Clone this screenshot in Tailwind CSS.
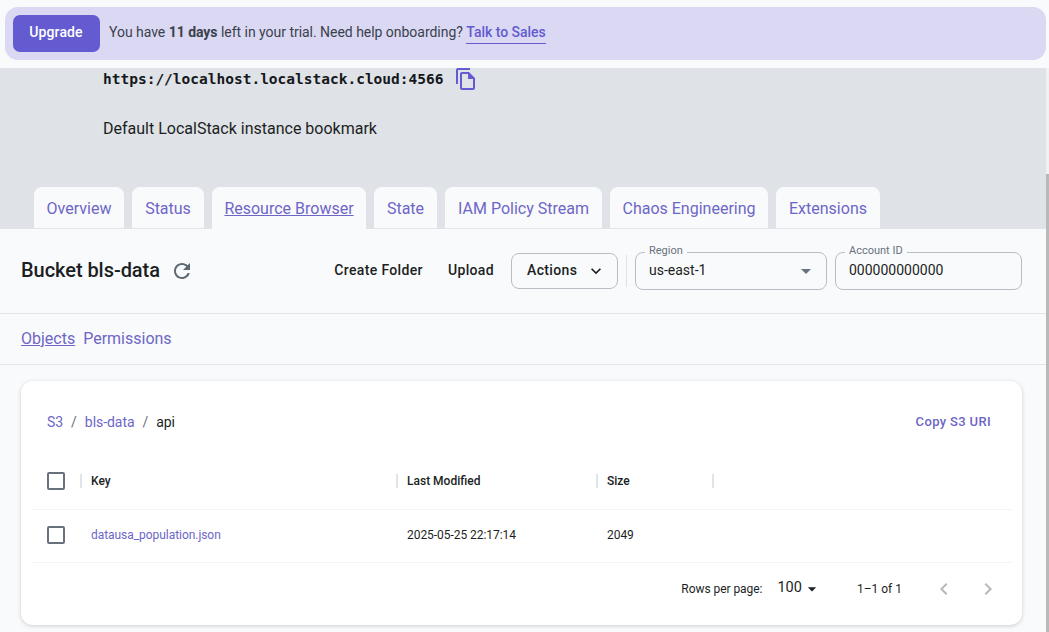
<!doctype html>
<html><head><meta charset="utf-8"><script src="https://cdn.jsdelivr.net/npm/@tailwindcss/browser@4"></script></head>
<body class="m-0 w-[1049px] h-[632px] overflow-hidden bg-[#f9fafb] font-['Roboto',sans-serif] text-[#1b1f24] relative">
<div class="absolute z-10 right-0 top-[68px] w-[3px] h-[564px] bg-[#f1f1f1]"><div class="mt-[106px] h-[458px] bg-[#b9b9b9]"></div></div>
<div class="h-[68px] pt-[7px] px-[5px] pr-[3px]">
  <div class="h-[53px] rounded-[13px] bg-[#dbd8f3] flex items-center pl-[8px] gap-[9px]">
    <div class="w-[87px] h-[37px] rounded-[7px] bg-[#635bcf] text-white text-[14px] font-medium tracking-[0.1px] flex items-center justify-center pb-[2px] pr-[1px]">Upgrade</div>
    <div class="text-[14px] text-[#39414c] tracking-[-0.03px] -mt-[2px]">You have <b class="font-bold">11 days</b> left in your trial. Need help onboarding? <span class="font-medium text-[#635bcf] border-b border-[#635bcf] pb-[3px]">Talk to Sales</span></div>
  </div>
</div>
<div class="h-[161px] bg-[#dfe2e6] relative">
  <div class="pl-[103px] pt-[2px] flex items-start h-[49px]">
    <span class="font-['DejaVu_Sans_Mono',monospace] font-bold text-[14.5px] leading-[18px] text-[#15181c]">https://localhost.localstack.cloud:4566</span>
    <svg class="ml-[11px] -mt-[3px]" width="24" height="24" viewBox="0 0 24 24" fill="#635bcf"><path d="M16 1H4c-1.1 0-2 .9-2 2v14h2V3h12V1zm-1 4H8c-1.1 0-1.99.9-1.99 2L6 21c0 1.1.89 2 1.99 2H19c1.1 0 2-.9 2-2V11l-6-6zM8 21V7h6v5h5v9H8z"/></svg>
  </div>
  <div class="pl-[103px] text-[16px] leading-[24px]">Default LocalStack instance bookmark</div>
  <div class="absolute left-[34px] bottom-0 flex gap-[8px] text-[16px] text-[#6d66c7] text-center">
    <div class="w-[90px] h-[42px] pt-[10px] rounded-t-[8px] bg-[#f9fafb] border-b border-[#e1e4e8]">Overview</div>
    <div class="w-[72px] h-[42px] pt-[10px] rounded-t-[8px] bg-[#f9fafb] border-b border-[#e1e4e8]">Status</div>
    <div class="w-[154px] h-[42px] pt-[10px] rounded-t-[8px] bg-[#f9fafb] underline">Resource Browser</div>
    <div class="w-[63px] h-[42px] pt-[10px] rounded-t-[8px] bg-[#f9fafb] border-b border-[#e1e4e8]">State</div>
    <div class="w-[157px] h-[42px] pt-[10px] rounded-t-[8px] bg-[#f9fafb] border-b border-[#e1e4e8]">IAM Policy Stream</div>
    <div class="w-[158px] h-[42px] pt-[10px] rounded-t-[8px] bg-[#f9fafb] border-b border-[#e1e4e8]">Chaos Engineering</div>
    <div class="w-[104px] h-[42px] pt-[10px] rounded-t-[8px] bg-[#f9fafb] border-b border-[#e1e4e8]">Extensions</div>
  </div>
</div>
<div class="h-[85px] border-b border-[#e1e4e8] flex items-center pl-[21px] pr-[24px] mr-[3px]">
  <span class="text-[20px] font-medium leading-[28px] tracking-[-0.05px] -mt-[2px]">Bucket bls-data</span>
  <svg class="ml-[10px]" width="24" height="24" viewBox="0 0 24 24" fill="#5d6975"><path d="M17.65 6.35C16.2 4.9 14.21 4 12 4c-4.42 0-7.99 3.58-7.99 8s3.57 8 7.99 8c3.73 0 6.84-2.55 7.73-6h-2.08c-.82 2.33-3.04 4-5.65 4-3.31 0-6-2.69-6-6s2.69-6 6-6c1.66 0 3.14.69 4.22 1.78L13 11h7V4l-2.35 2.35z"/></svg>
  <div class="ml-auto flex items-center">
    <span class="text-[14px] font-medium tracking-[0.35px] mr-[25px] -mt-[2px]">Create Folder</span>
    <span class="text-[14px] font-medium tracking-[0.35px] mr-[17px] -mt-[2px]">Upload</span>
    <div class="w-[107px] h-[36px] rounded-[8px] border border-[#b8bec5] text-[14px] font-medium tracking-[0.35px] flex items-center pl-[15px]"><span class="-mt-[2px]">Actions</span>
      <svg class="ml-[9px]" width="20" height="20" viewBox="0 0 24 24" fill="#1b1f24"><path d="M7.41 8.59 12 13.17l4.59-4.58L18 10l-6 6-6-6z"/></svg>
    </div>
    <div class="w-px h-[32px] bg-[#dfe2e6] mx-[8px]"></div>
    <div class="relative w-[192px] h-[38px] rounded-[8px] border border-[#b8bec5] flex items-center pl-[13px] text-[14px]"><span class="-mt-[2px]">us-east-1</span>
      <span class="absolute left-[9px] -top-[9px] px-[4px] bg-[#f9fafb] text-[11px] leading-[14px] text-[#67727e]">Region</span>
      <svg class="absolute right-[8px] top-[6px]" width="24" height="24" viewBox="0 0 24 24" fill="#67727e"><path d="m7 10 5 5 5-5z"/></svg>
    </div>
    <div class="relative ml-[8px] w-[187px] h-[38px] rounded-[8px] border border-[#b8bec5] flex items-center pl-[13px] text-[14px]"><span class="-mt-[2px]">000000000000</span>
      <span class="absolute left-[9px] -top-[9px] px-[4px] bg-[#f9fafb] text-[11px] leading-[14px] text-[#67727e]">Account ID</span>
    </div>
  </div>
</div>
<div class="h-[51px] mr-[3px] border-b border-[#e1e4e8] flex items-center pl-[21px] gap-[8px] text-[16px] text-[#6d66c7]">
  <span class="underline">Objects</span><span>Permissions</span>
</div>
<div class="ml-[21px] mt-[16px] w-[1001px] h-[244px] rounded-[12px] bg-white shadow-[0_1px_4px_rgba(0,0,0,0.18)] px-[10px] relative">
  <div class="h-[82px] pl-[16px] pr-[21px] flex items-center text-[14px] pt-[1px] tracking-[-0.05px]">
    <span class="text-[#6d66c7]">S3</span><span class="mx-[8px] text-[#67727e]">/</span><span class="text-[#6d66c7]">bls-data</span><span class="mx-[8px] text-[#67727e]">/</span><span>api</span>
    <span class="ml-auto text-[#6d66c7] text-[13px] font-medium tracking-[0.35px] -mt-[2px]">Copy S3 URI</span>
  </div>
  <div class="h-[47px] pb-[10px] flex items-center border-b border-[#f3f4f6] text-[12px] font-medium">
    <span class="ml-[16px] w-[18px] h-[18px] rounded-[2px] border-2 border-[#67727e]"></span>
    <span class="ml-[15px] w-[2px] h-[14px] bg-[#e1e4e8]"></span>
    <span class="ml-[9px] w-[305px]">Key</span>
    <span class="w-[2px] h-[14px] bg-[#e1e4e8]"></span>
    <span class="ml-[9px] w-[189px]">Last Modified</span>
    <span class="w-[2px] h-[14px] bg-[#e1e4e8]"></span>
    <span class="ml-[9px] w-[105px]">Size</span>
    <span class="w-[2px] h-[14px] bg-[#e1e4e8]"></span>
  </div>
  <div class="h-[53px] flex items-center border-b border-[#f3f4f6] text-[12px] tracking-[-0.05px]">
    <span class="ml-[16px] w-[18px] h-[18px] rounded-[2px] border-2 border-[#67727e] -mt-[2px]"></span>
    <span class="ml-[26px] w-[316px] text-[#6d66c7] -mt-[2px]">datausa_population.json</span>
    <span class="w-[200px] -mt-[2px]">2025-05-25 22:17:14</span>
    <span class="-mt-[2px]">2049</span>
  </div>
  <div class="h-[52px] flex items-center justify-end text-[12px] pr-[12px]">
    <span class="tracking-[-0.05px]">Rows per page:</span>
    <span class="ml-[15px] text-[14.5px] -mt-[3px]">100</span>
    <svg class="ml-[0px]" width="20" height="20" viewBox="0 0 24 24" fill="#1b1f24"><path d="m7 10 5 5 5-5z"/></svg>
    <span class="ml-[35px]">1–1 of 1</span>
    <svg class="ml-[30px]" width="24" height="24" viewBox="0 0 24 24" fill="#b5b9bd"><path d="M15.41 7.41 14 6l-6 6 6 6 1.41-1.41L10.83 12z"/></svg>
    <svg class="ml-[20px]" width="24" height="24" viewBox="0 0 24 24" fill="#b5b9bd"><path d="M10 6 8.59 7.41 13.17 12l-4.58 4.59L10 18l6-6z"/></svg>
  </div>
</div>
</body></html>
